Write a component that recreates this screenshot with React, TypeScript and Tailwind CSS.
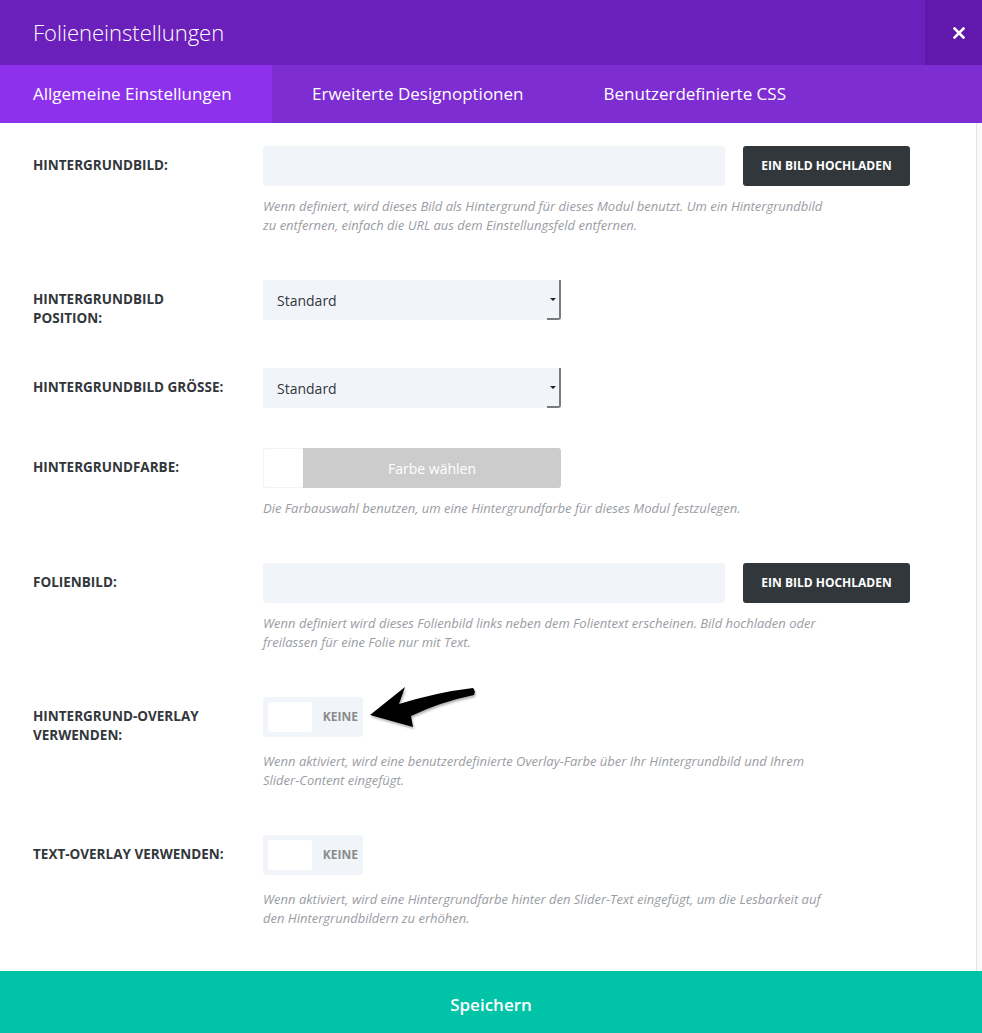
import React from 'react';

// Zeilen mit Beschreibung werden zeilenweise angegeben, damit der Umbruch stimmt
type Row = {
  label: string[];
  kind: 'upload' | 'select' | 'color' | 'toggle';
  desc?: string[];
};

const rows: Row[] = [
  {
    label: ['HINTERGRUNDBILD:'],
    kind: 'upload',
    desc: [
      'Wenn definiert, wird dieses Bild als Hintergrund für dieses Modul benutzt. Um ein Hintergrundbild',
      'zu entfernen, einfach die URL aus dem Einstellungsfeld entfernen.',
    ],
  },
  { label: ['HINTERGRUNDBILD', 'POSITION:'], kind: 'select' },
  { label: ['HINTERGRUNDBILD GRÖSSE:'], kind: 'select' },
  {
    label: ['HINTERGRUNDFARBE:'],
    kind: 'color',
    desc: ['Die Farbauswahl benutzen, um eine Hintergrundfarbe für dieses Modul festzulegen.'],
  },
  {
    label: ['FOLIENBILD:'],
    kind: 'upload',
    desc: [
      'Wenn definiert wird dieses Folienbild links neben dem Folientext erscheinen. Bild hochladen oder',
      'freilassen für eine Folie nur mit Text.',
    ],
  },
  {
    label: ['HINTERGRUND-OVERLAY', 'VERWENDEN:'],
    kind: 'toggle',
    desc: [
      'Wenn aktiviert, wird eine benutzerdefinierte Overlay-Farbe über Ihr Hintergrundbild und Ihrem',
      'Slider-Content eingefügt.',
    ],
  },
  {
    label: ['TEXT-OVERLAY VERWENDEN:'],
    kind: 'toggle',
    desc: [
      'Wenn aktiviert, wird eine Hintergrundfarbe hinter den Slider-Text eingefügt, um die Lesbarkeit auf',
      'den Hintergrundbildern zu erhöhen.',
    ],
  },
];

const tabs = ['Allgemeine Einstellungen', 'Erweiterte Designoptionen', 'Benutzerdefinierte CSS'];

const Control: React.FC<{ kind: Row['kind'] }> = ({ kind }) => {
  if (kind === 'upload') {
    return (
      <div className="flex gap-[18px]">
        <div className="h-10 w-[462px] rounded-[3px] bg-[#f1f4f8]" />
        <button className="h-10 w-[167px] rounded-[3px] bg-[#32373c] text-[12px] font-bold text-white">
          EIN BILD HOCHLADEN
        </button>
      </div>
    );
  }
  if (kind === 'select') {
    return (
      <div className="relative flex h-10 w-[298px] items-center rounded-[3px] bg-[#f1f4f8] pl-[14px] text-[14px] text-[#32373c]">
        Standard
        <span className="absolute right-0 top-0 h-10 w-[14px] rounded-br-[3px] border-r-2 border-b-2 border-[#7a7a7a]" />
        <span className="absolute right-[5px] top-[18px] h-0 w-0 border-x-[3px] border-t-[3px] border-x-transparent border-t-[#222]" />
      </div>
    );
  }
  if (kind === 'color') {
    return (
      <div className="flex h-10 w-[298px]">
        <div className="h-10 w-10 rounded-l-[3px] border border-r-0 border-[#f3f3f3] bg-white" />
        <div className="flex flex-1 items-center justify-center rounded-r-[3px] bg-[#cccccc] text-[14px] text-white">
          Farbe wählen
        </div>
      </div>
    );
  }
  return (
    <div className="flex h-10 w-[100px] items-center rounded-[3px] bg-[#f1f4f8] p-[5px]">
      <div className="h-[30px] w-[45px] rounded-[3px] bg-white" />
      <span className="ml-[11px] text-[12px] font-bold text-[#8b8b8b]">KEINE</span>
    </div>
  );
};

export default function App() {
  return (
    <div
      className="flex h-[1033px] w-[982px] flex-col overflow-hidden bg-white"
      style={{ fontFamily: '"Open Sans", "Liberation Sans", sans-serif' }}
    >
      {/* Kopfzeile */}
      <div className="flex h-[65px] shrink-0 bg-[#6b1fbb]">
        <div className="flex flex-1 items-center pl-[33px] text-[22px] font-light text-white">
          Folieneinstellungen
        </div>
        <div className="flex w-[57px] items-center justify-center bg-[#6119ad] pl-[10px]">
          <svg width="12" height="12" viewBox="0 0 12 12">
            <path d="M1.5 1.5 L10.5 10.5 M10.5 1.5 L1.5 10.5" stroke="#fff" strokeWidth="2.6" strokeLinecap="square" />
          </svg>
        </div>
      </div>

      {/* Reiter */}
      <div className="flex h-[58px] shrink-0 bg-[#7e2dd2] text-[17px] text-white">
        <div className="flex w-[272px] items-center bg-[#8e31ec] pl-[33px]">{tabs[0]}</div>
        <div className="flex items-center px-10">{tabs[1]}</div>
        <div className="flex items-center px-10">{tabs[2]}</div>
      </div>

      {/* Inhalt */}
      <div className="relative flex min-h-0 flex-1">
        <div className="flex-1 pt-[23px]">
          {rows.map((row, i) => (
            <div
              key={i}
              className={`grid grid-cols-[263px_1fr] ${row.desc ? 'mb-[45px]' : 'mb-10'}`}
            >
              <div className="pl-[33px] pt-[10px] text-[13.5px] font-bold leading-[19px] text-[#32373c]">
                {row.label.map((l) => (
                  <div key={l}>{l}</div>
                ))}
              </div>
              <div>
                <Control kind={row.kind} />
                {row.desc && (
                  <div
                    className={`${row.kind === 'toggle' ? 'mt-[15px]' : 'mt-[11px]'} text-[13px] italic leading-[19px] text-[#9a9ca3]`}
                  >
                    {row.desc.map((d) => (
                      <div key={d}>{d}</div>
                    ))}
                  </div>
                )}
              </div>
            </div>
          ))}
        </div>
        <div className="w-[6px] border-l border-[#e3e3e3] bg-[#fafafa]" />

        {/* Pfeil als Markierung */}
        <svg
          className="absolute left-[360px] top-[557px]"
          width="130"
          height="60"
          viewBox="0 0 130 60"
        >
          <path
            d="M10 35 L45 7 L39 24 Q78 12 113 8 Q116 11 114 15 Q80 22 51 36 L53 47 Z"
            fill="#000"
            style={{ filter: 'drop-shadow(1px 2px 1px rgba(0,0,0,0.3))' }}
          />
        </svg>
      </div>

      {/* Fußzeile */}
      <button className="h-[62px] shrink-0 bg-[#00c3a7] pt-[6px] text-[17px] font-semibold text-white">
        Speichern
      </button>
    </div>
  );
}
